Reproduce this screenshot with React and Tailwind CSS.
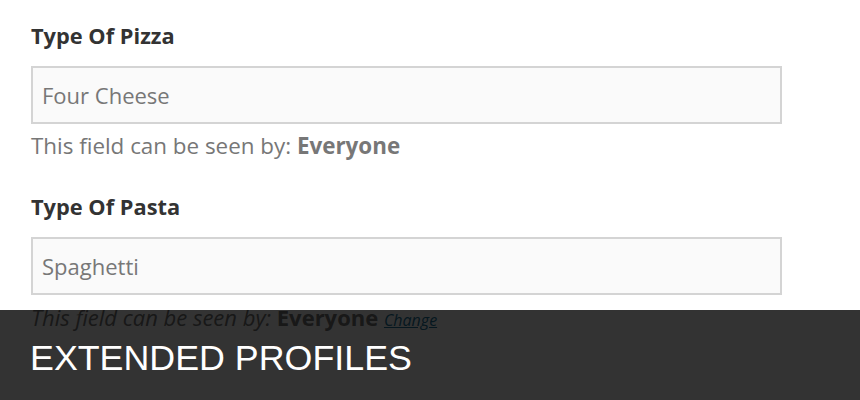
export default function App() {
  const font = { fontFamily: '"Open Sans", "Noto Sans", sans-serif' };
  return (
    <div className="relative w-[860px] h-[400px] overflow-hidden bg-white" style={font}>
      <div className="pl-[31px] pr-[78px] pt-[21px] flex flex-col">
        <div className="text-[21.8px] leading-[30px] font-bold text-[#333]">Type Of Pizza</div>
        <div className="mt-[15px] h-[58px] border-2 border-[#d4d4d4] bg-[#fafafa] flex items-center pl-[9px] text-[22px] text-[#777]">
          Four Cheese
        </div>
        <div className="mt-[7px] text-[22.4px] leading-[30px] text-[#777]">
          This field can be seen by: <span className="font-bold">Everyone</span>
        </div>
        <div className="mt-[31px] text-[21.8px] leading-[30px] font-bold text-[#333]">Type Of Pasta</div>
        <div className="mt-[15px] h-[58px] border-2 border-[#d4d4d4] bg-[#fafafa] flex items-center pl-[9px] text-[22px] text-[#777]">
          Spaghetti
        </div>
        <div className="mt-[7px] text-[22px] leading-[30px] text-[#777] italic">
          This field can be seen by: <span className="font-bold not-italic">Everyone</span>{' '}
          <a className="text-[16px] underline text-[#21759b]">Change</a>
        </div>
      </div>
      <div className="absolute left-0 right-0 top-[310px] h-[90px] bg-black/80 pl-[30px] pt-[26px]">
        <div className="text-white text-[35.8px] leading-[44px]" style={{ fontFamily: '"Liberation Sans", Arial, sans-serif' }}>
          EXTENDED PROFILES
        </div>
      </div>
    </div>
  );
}
